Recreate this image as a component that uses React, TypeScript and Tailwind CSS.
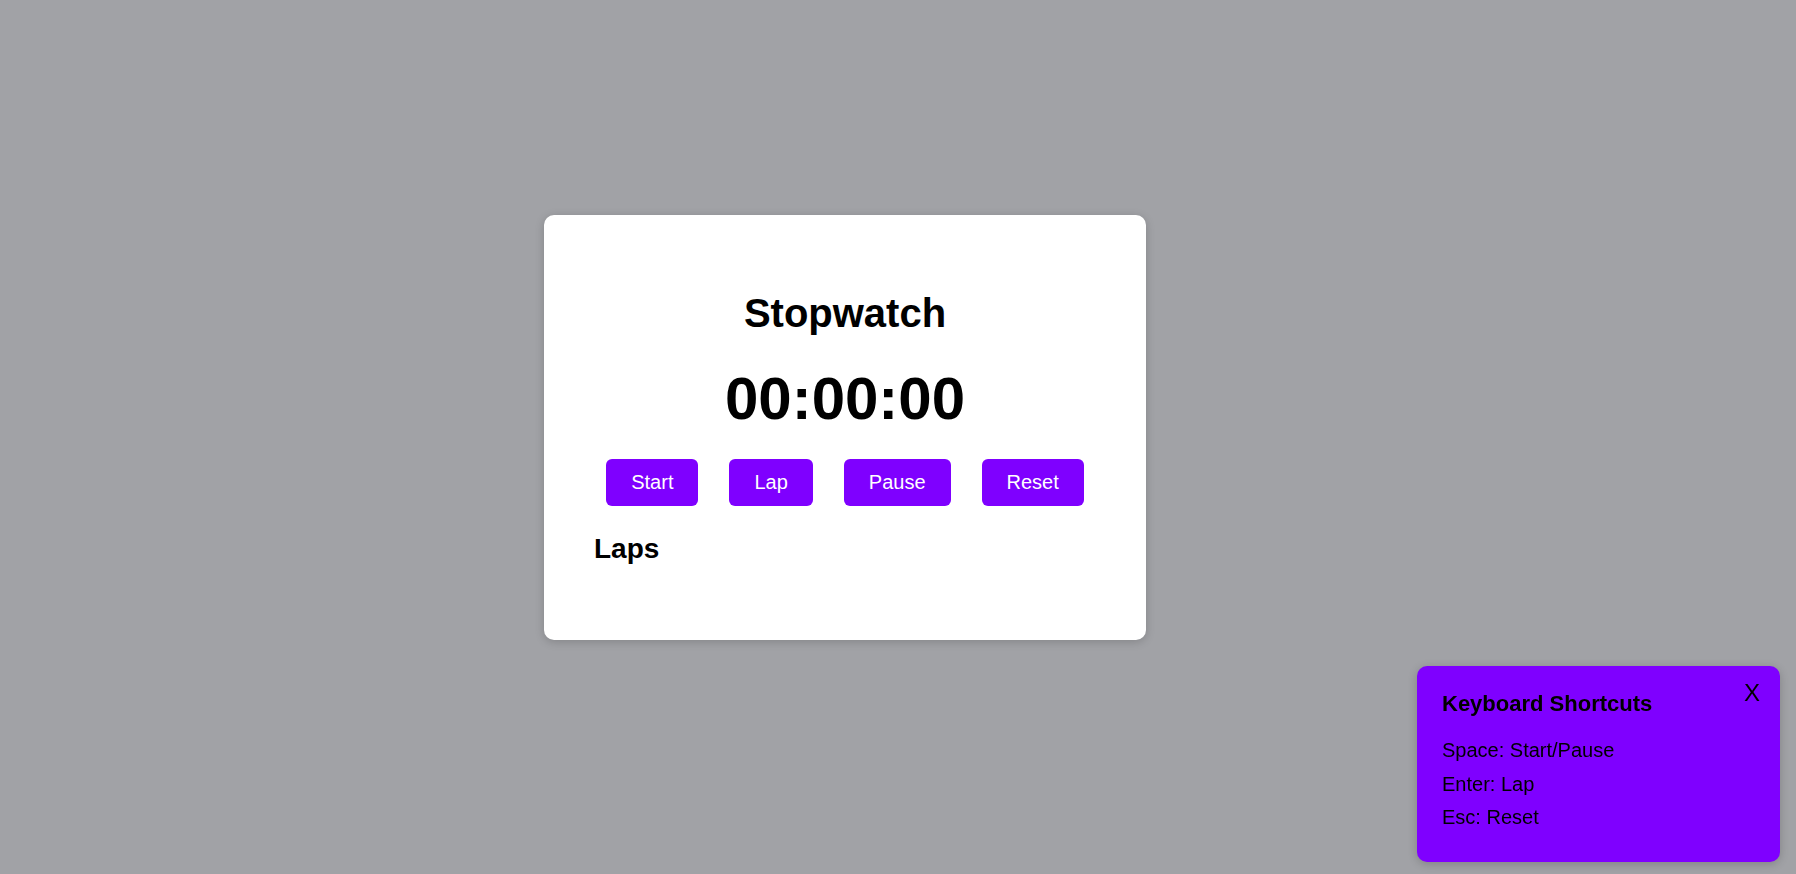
import React from "react";

export default function App() {
  const buttons = ["Start", "Lap", "Pause", "Reset"];
  const shortcuts = ["Space: Start/Pause", "Enter: Lap", "Esc: Reset"];

  return (
    <div
      className="min-h-screen w-full bg-[#a1a2a6] flex items-center justify-center pr-[106px] pb-[19px]"
      style={{ fontFamily: '"Liberation Sans", Arial, sans-serif' }}
    >
      <div className="w-[602px] bg-white rounded-[10px] shadow-[0_2px_10px_rgba(0,0,0,0.18)] pt-[75px] pb-[75px] flex flex-col">
        <h1 className="text-center text-[40px] font-bold text-black leading-[46px]">Stopwatch</h1>
        <div className="mt-[28px] text-center text-[60px] font-bold text-black leading-[69px]">00:00:00</div>
        <div className="mt-[26px] flex justify-center gap-[31px]">
          {buttons.map((b) => (
            <button
              key={b}
              className="bg-[#7f00ff] text-white text-[20px] leading-[23px] px-[25px] py-[12px] rounded-[6px]"
            >
              {b}
            </button>
          ))}
        </div>
        <h2 className="mt-[27px] pl-[50px] text-[28px] font-bold text-black leading-[32px]">Laps</h2>
      </div>

      <div className="fixed right-[16px] bottom-[12px] w-[363px] h-[196px] bg-[#7f00ff] rounded-[10px] shadow-[0_2px_10px_rgba(0,0,0,0.2)] pl-[25px] pt-[25px] text-black">
        <button className="absolute top-[13px] right-[20px] text-[24px] leading-[28px] text-black">X</button>
        <h3 className="text-[22px] font-bold leading-[25px]">Keyboard Shortcuts</h3>
        <div className="mt-[23px] flex flex-col gap-[10.5px]">
          {shortcuts.map((s) => (
            <p key={s} className="text-[20px] leading-[23px]">
              {s}
            </p>
          ))}
        </div>
      </div>
    </div>
  );
}
